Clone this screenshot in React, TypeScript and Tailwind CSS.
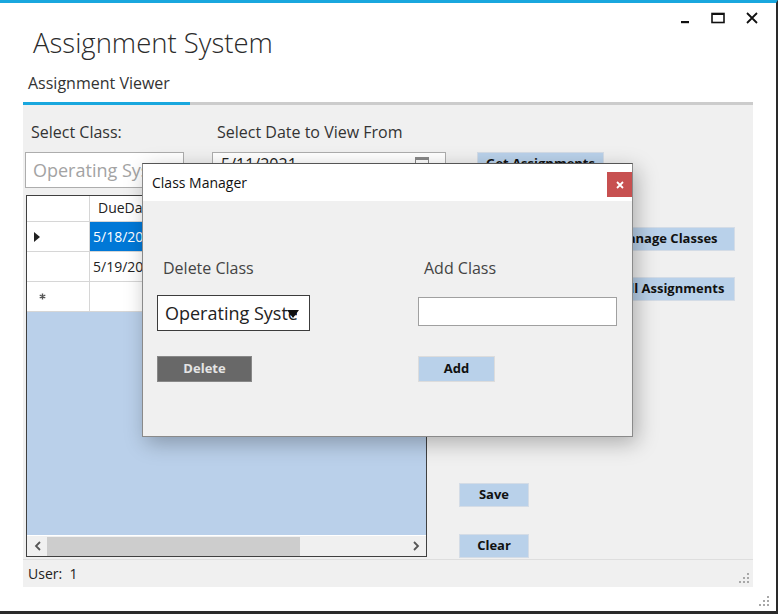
import React from "react";

function WindowControls() {
  return (
    <div className="mr-[18px] mt-[7px] flex items-center gap-[21px]">
      <svg width="9" height="12" viewBox="0 0 9 12" className="mt-[3px]">
        <rect x="0" y="8" width="8" height="2.2" fill="#111" />
      </svg>
      <svg width="14" height="12" viewBox="0 0 14 12">
        <rect x="1" y="1.5" width="12" height="9" fill="none" stroke="#111" strokeWidth="1.6" />
        <rect x="1" y="1" width="12" height="2" fill="#111" />
      </svg>
      <svg width="12" height="12" viewBox="0 0 12 12">
        <path d="M1 1 L11 11 M11 1 L1 11" stroke="#111" strokeWidth="1.8" />
      </svg>
    </div>
  );
}

function Grip({ className }: { className: string }) {
  return (
    <svg width="12" height="12" viewBox="0 0 12 12" className={className}>
      {[
        [9, 1],
        [5, 5],
        [9, 5],
        [1, 9],
        [5, 9],
        [9, 9],
      ].map(([x, y]) => (
        <rect key={`${x}-${y}`} x={x} y={y} width="2" height="2" fill="#a8a8a8" />
      ))}
    </svg>
  );
}

function BlueButton({ children, className }: { children: React.ReactNode; className: string }) {
  return (
    <div
      className={`flex h-[24px] items-center justify-center border border-[#d4dce6] bg-[#b9d1ea] text-[13px] font-bold text-[#111] ${className}`}
    >
      {children}
    </div>
  );
}

function DataGrid() {
  return (
    <div className="flex h-[362px] w-[401px] flex-col border border-[#404040] bg-[#bad0ea]">
      {/* header */}
      <div className="flex h-[26px] bg-white">
        <div className="w-[63px] border-r border-b border-[#d6d6d6]" />
        <div className="w-[110px] border-r border-b border-[#d6d6d6] pl-[8px] pt-[3px] text-[14px] leading-[18px] text-[#222]">
          DueDate
        </div>
        <div className="w-[160px] border-b border-[#d6d6d6] pl-[8px] pt-[3px] text-[14px] leading-[18px] text-[#222]">
          Assignment
        </div>
      </div>
      {/* row 1 */}
      <div className="flex h-[30px] bg-white">
        <div className="flex w-[63px] items-center border-r border-b border-[#d6d6d6] pl-[7px]">
          <svg width="6" height="10" viewBox="0 0 6 10">
            <path d="M0 0 L6 5 L0 10 Z" fill="#222" />
          </svg>
        </div>
        <div className="flex w-[110px] items-center border-b border-[#d6d6d6] bg-[#0078d7] pl-[3px] text-[14px] text-white">
          5/18/2021
        </div>
        <div className="w-[160px] border-b border-[#d6d6d6]" />
      </div>
      {/* row 2 */}
      <div className="flex h-[30px] bg-white">
        <div className="w-[63px] border-r border-b border-[#d6d6d6]" />
        <div className="flex w-[110px] items-center border-r border-b border-[#d6d6d6] pl-[3px] text-[14px] text-[#222]">
          5/19/2021
        </div>
        <div className="w-[160px] border-b border-[#d6d6d6]" />
      </div>
      {/* new row */}
      <div className="flex h-[30px] bg-white">
        <div className="flex w-[63px] items-center border-r border-b border-[#d6d6d6] pl-[12px]">
          <svg width="7" height="7" viewBox="0 0 7 7">
            <path d="M3.5 0.5 V6.5 M0.7 2 L6.3 5 M6.3 2 L0.7 5" stroke="#555" strokeWidth="1.4" />
          </svg>
        </div>
        <div className="w-[110px] border-r border-b border-[#d6d6d6]" />
        <div className="w-[160px] border-b border-[#d6d6d6]" />
      </div>
      <div className="flex-1" />
      {/* horizontal scrollbar */}
      <div className="flex h-[21px] items-center border-t border-white bg-[#f0f0f0]">
        <div className="flex w-[20px] justify-center">
          <svg width="7" height="10" viewBox="0 0 7 10">
            <path d="M6 1 L2 5 L6 9" fill="none" stroke="#555" strokeWidth="1.8" />
          </svg>
        </div>
        <div className="h-[19px] w-[253px] bg-[#cdcdcd]" />
        <div className="flex-1" />
        <div className="flex w-[20px] justify-center">
          <svg width="7" height="10" viewBox="0 0 7 10">
            <path d="M1 1 L5 5 L1 9" fill="none" stroke="#555" strokeWidth="1.8" />
          </svg>
        </div>
      </div>
    </div>
  );
}

function ClassManager() {
  return (
    <div className="absolute left-[142px] top-[160px] flex h-[274px] w-[491px] flex-col border border-[#8a8a8a] border-t-[#555] bg-[#f0f0f0] shadow-[4px_6px_20px_rgba(0,0,0,0.28)]">
      <div className="relative flex h-[37px] items-center bg-white pl-[9px] text-[14px] text-[#111]">
        Class Manager
        <div className="absolute right-0 top-[8px] flex h-[25px] w-[25px] items-center justify-center bg-[#c75050]">
          <svg width="8" height="8" viewBox="0 0 8 8">
            <path d="M1 1 L7 7 M7 1 L1 7" stroke="#fff" strokeWidth="1.8" />
          </svg>
        </div>
      </div>
      <div className="flex pt-[57px]">
        <div className="ml-[14px] flex w-[153px] flex-col">
          <div className="pl-[6px] text-[16px] leading-[20px] text-[#444]">Delete Class</div>
          <div className="mt-[17px] flex h-[36px] items-center overflow-hidden border border-[#3c3c3c] bg-white pl-[7px] pr-[10px]">
            <span className="flex-1 overflow-hidden whitespace-nowrap text-[18px] text-[#222]">Operating Systems</span>
            <svg width="12" height="8" viewBox="0 0 12 8" className="-ml-[10px] mt-[1px] shrink-0">
              <path d="M0 0 L12 0 L6 8 Z" fill="#111" />
            </svg>
          </div>
          <div className="mt-[25px] flex h-[26px] w-[95px] items-center justify-center border border-[#888] bg-[#686868] text-[13px] font-bold text-[#e4e4e4]">
            Delete
          </div>
        </div>
        <div className="ml-[108px] flex w-[199px] flex-col">
          <div className="pl-[6px] text-[16px] leading-[20px] text-[#444]">Add Class</div>
          <div className="mt-[19px] h-[29px] border border-[#a0a0a0] bg-white" />
          <div className="mt-[30px] flex h-[26px] w-[77px] items-center justify-center border border-[#dcdcdc] bg-[#b9d1ea] text-[13px] font-bold text-[#111]">
            Add
          </div>
        </div>
      </div>
    </div>
  );
}

export default function App() {
  return (
    <div className="relative flex h-[614px] w-[778px] flex-col overflow-hidden border-t-[3px] border-r-2 border-b-[3px] border-t-[#19a7de] border-r-[#2a2a2a] border-b-[#2a2a2a] bg-white font-['Open_Sans',sans-serif] text-[#333]">
      {/* title bar */}
      <div className="flex h-[62px] items-start justify-between">
        <h1 className="ml-[33px] mt-[23px] text-[27.5px] font-light leading-[34px] text-[#2b2b2b]">Assignment System</h1>
        <WindowControls />
      </div>

      {/* tab header */}
      <div className="mx-[23px] flex flex-col">
        <div className="h-[37px] pl-[5px] pt-[8px] text-[16px] leading-[20px] text-[#333]">Assignment Viewer</div>
        <div className="flex h-[3px]">
          <div className="w-[167px] bg-[#19a7de]" />
          <div className="flex-1 bg-[#cccccc]" />
        </div>
      </div>

      {/* tab page */}
      <div className="mx-[23px] flex h-[482px] flex-col bg-[#f0f0f0]">
        <div className="flex flex-1 flex-col">
          <div className="flex pt-[17px]">
            <div className="ml-[2px] flex w-[159px] flex-col">
              <div className="pl-[6px] text-[16px] leading-[20px] text-[#333]">Select Class:</div>
              <div className="mt-[10px] flex h-[36px] items-center overflow-hidden whitespace-nowrap border border-[#adadad] bg-white pl-[7px] text-[18px] text-[#a3a3a3]">
                Operating Systems
              </div>
            </div>
            <div className="ml-[28px] flex w-[234px] flex-col">
              <div className="pl-[5px] text-[16px] leading-[20px] text-[#333]">Select Date to View From</div>
              <div className="mt-[10px] flex h-[30px] items-start border border-[#adadad] bg-white pl-[8px] pr-[6px] pt-[1px]">
                <span className="flex-1 text-[16px] leading-[20px] text-[#222]">5/11/2021</span>
                <div className="mt-[3px] flex items-start gap-[2px]">
                  <div className="h-[13px] w-[14px] border border-[#888] border-t-[3px]" />
                  <svg width="8" height="8" viewBox="0 0 8 8" className="mt-[6px]">
                    <path d="M0 1 L8 1 L4 6 Z" fill="#555" />
                  </svg>
                </div>
              </div>
            </div>
            <div className="ml-[31px] flex flex-col pt-[30px]">
              <BlueButton className="w-[127px]">Get Assignments</BlueButton>
            </div>
          </div>

          <div className="mt-[7px] flex">
            <div className="ml-[3px]">
              <DataGrid />
            </div>
            <div className="flex flex-1 flex-col">
              <BlueButton className="mr-[18px] mt-[32px] w-[137px] self-end">Manage Classes</BlueButton>
              <BlueButton className="mr-[18px] mt-[26px] w-[159px] self-end">View All Assignments</BlueButton>
              <BlueButton className="ml-[32px] mt-[182px] w-[70px]">Save</BlueButton>
              <BlueButton className="ml-[32px] mt-[27px] w-[70px]">Clear</BlueButton>
            </div>
          </div>
        </div>

        {/* status strip */}
        <div className="flex h-[28px] items-center justify-between border-t border-[#dedede] pl-[5px] pr-[3px]">
          <span className="text-[14px] text-[#222]">User:&nbsp; 1</span>
          <Grip className="mt-[8px]" />
        </div>
      </div>

      <div className="flex flex-1 items-end justify-end pb-[4px] pr-[6px]">
        <Grip className="" />
      </div>

      <ClassManager />
    </div>
  );
}
